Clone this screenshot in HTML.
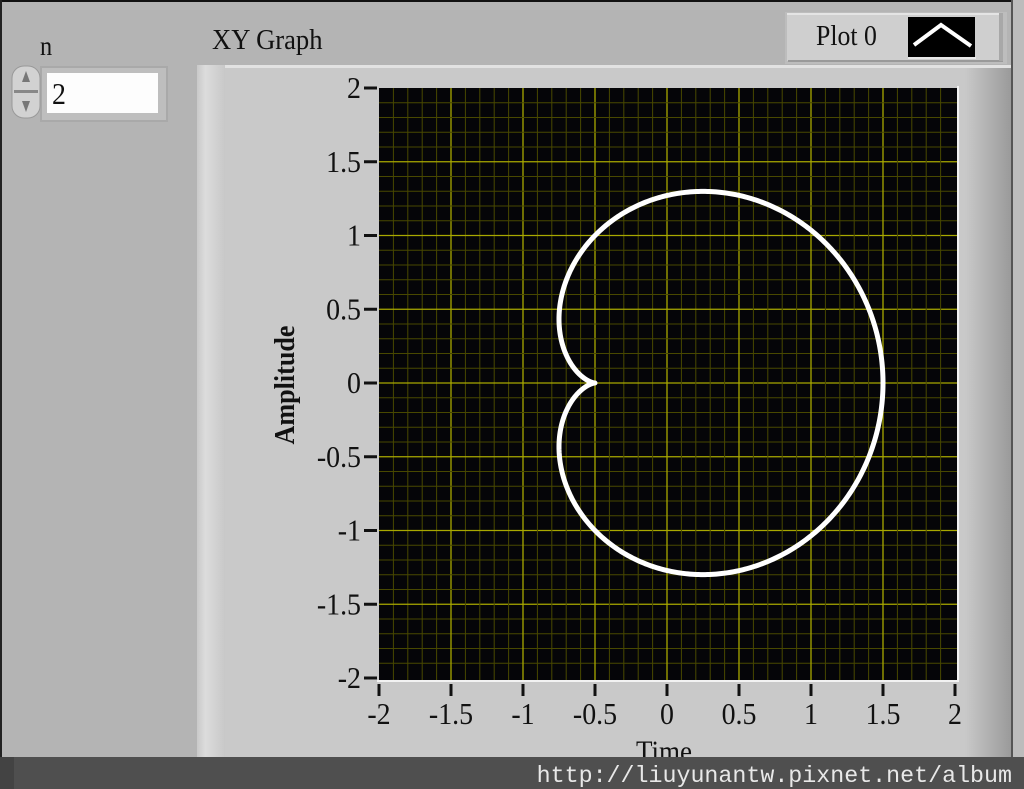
<!DOCTYPE html>
<html><head><meta charset="utf-8">
<style>
html,body{margin:0;padding:0;width:1024px;height:789px;overflow:hidden;background:#b4b4b4}
svg{display:block}
text{font-family:"Liberation Serif",serif;fill:#111}
</style></head>
<body>
<svg id="s" width="1024" height="789" viewBox="0 0 1024 789" xmlns="http://www.w3.org/2000/svg">
<defs>
<linearGradient id="lg" x1="0" x2="1">
<stop offset="0" stop-color="#c9c9c9"/><stop offset="0.3" stop-color="#dcdcdc"/><stop offset="1" stop-color="#c8c8c8"/>
</linearGradient>
<linearGradient id="rg" x1="0" x2="1">
<stop offset="0" stop-color="#c9c9c9"/><stop offset="1" stop-color="#9a9a9a"/>
</linearGradient>
</defs>
<rect x="0" y="0" width="1024" height="789" fill="#b4b4b4"/>
<rect x="0" y="0" width="1024" height="2" fill="#111"/>
<rect x="0" y="0" width="2" height="789" fill="#222"/>
<rect x="1011" y="0" width="2" height="789" fill="#555"/>
<rect x="1013" y="0" width="11" height="789" fill="#bcbcbc"/>
<!-- graph panel -->
<rect x="197" y="65" width="814" height="713" fill="#c9c9c9"/>
<rect x="197" y="65" width="814" height="3" fill="#e2e2e2"/>
<rect x="197" y="65" width="28" height="713" fill="url(#lg)"/>
<rect x="965" y="68" width="46" height="710" fill="url(#rg)"/>
<!-- legend -->
<rect x="785" y="12" width="222" height="52" fill="#bdbdbd"/>
<rect x="787" y="13" width="216" height="48" fill="#cfcfcf"/>
<rect x="787" y="13" width="216" height="2" fill="#e4e4e4"/>
<rect x="788" y="60" width="215" height="2" fill="#9a9a9a"/>
<rect x="999" y="13" width="4" height="48" fill="#a8a8a8"/>
<text transform="translate(816,45) scale(0.92,1)" font-size="28">Plot 0</text>
<rect x="908" y="17" width="67" height="41" fill="#000"/>
<rect x="908" y="57" width="68" height="2" fill="#e8e8e8"/>
<polyline points="914,45 941,25 971,46" fill="none" stroke="#fff" stroke-width="4"/>
<!-- labels -->
<text transform="translate(40,55) scale(0.9,1)" font-size="27">n</text>
<text transform="translate(212,49) scale(0.95,1)" font-size="28">XY Graph</text>
<!-- numeric control -->
<rect x="40" y="66" width="128" height="56" fill="#a9a9a9"/>
<rect x="42" y="68" width="124" height="52" fill="#bebebe"/>
<rect x="47" y="73" width="111" height="40" fill="#fdfdfd"/>
<rect x="12" y="66" width="28" height="52" rx="12" fill="#d2d2d2" stroke="#999" stroke-width="1"/>
<rect x="14" y="90" width="24" height="3" fill="#888"/>
<polygon points="26,71 22,82 30,82" fill="#777"/>
<polygon points="26,112 22,101 30,101" fill="#777"/>
<text transform="translate(52,104) scale(0.9,1)" font-size="31">2</text>
<!-- plot -->
<rect x="379" y="88" width="578" height="592" fill="#050508"/>
<rect x="957" y="86" width="2" height="596" fill="#f2f2f2"/>
<rect x="377" y="680" width="582" height="2" fill="#f2f2f2"/>
<g id="grid"></g>
<path id="curve" fill="none" stroke="#fff" stroke-width="5" stroke-linejoin="round"/>
<g id="ticks"></g>
<text transform="translate(294,385) rotate(-90) scale(0.9,1)" font-size="29" text-anchor="middle" font-weight="bold">Amplitude</text>
<text transform="translate(664,761) scale(0.9,1)" font-size="30" text-anchor="middle">Time</text>
<!-- bottom bar -->
<rect x="0" y="757" width="1024" height="32" fill="#4f4f4f"/>
<rect x="0" y="757" width="14" height="32" fill="#434343"/>
<text x="1012" y="782" font-size="23.3" text-anchor="end" style="font-family:'Liberation Mono',monospace;fill:#e8e8e8">http://liuyunantw.pixnet.net/album</text>
</svg>
<script>
var NS="http://www.w3.org/2000/svg";
function el(t,a,p){var e=document.createElementNS(NS,t);for(var k in a)e.setAttribute(k,a[k]);p.appendChild(e);return e;}
var g=document.getElementById("grid"),tk=document.getElementById("ticks");
var X=function(x){return 667+144*x},Y=function(y){return 383-147.5*y};
for(var i=-20;i<=20;i++){
  var v=i/10; var maj=(i%5===0);
  var c=maj?"#a8a800":"#484800";
  if(i>-20&&i<20){
  el("line",{x1:X(v),x2:X(v),y1:88,y2:680,stroke:c,"stroke-width":maj?1.3:1},g);
  el("line",{x1:379,x2:957,y1:Y(v),y2:Y(v),stroke:c,"stroke-width":maj?1.3:1},g);}
}
var labs=["-2","-1.5","-1","-0.5","0","0.5","1","1.5","2"];
for(var j=0;j<9;j++){
  var v=-2+j*0.5;
  el("line",{x1:X(v),x2:X(v),y1:684,y2:696,stroke:"#111","stroke-width":3},tk);
  var t=el("text",{transform:"translate("+X(v)+",724) scale(0.9,1)","font-size":"31","text-anchor":"middle"},tk);t.textContent=labs[j];
  el("line",{x1:364,x2:377,y1:Y(v),y2:Y(v),stroke:"#111","stroke-width":3},tk);
  var t2=el("text",{transform:"translate(361,"+(Y(v)+10)+") scale(0.9,1)","font-size":"31","text-anchor":"end"},tk);t2.textContent=labs[j];
}
var d="";
for(var k=0;k<=720;k++){var a=k/720*2*Math.PI;var x=Math.cos(a)+0.5*Math.cos(2*a),y=Math.sin(a)+0.5*Math.sin(2*a);
d+=(k?"L":"M")+X(x).toFixed(2)+" "+Y(y).toFixed(2);}
document.getElementById("curve").setAttribute("d",d+"Z");
</script>
</body></html>
